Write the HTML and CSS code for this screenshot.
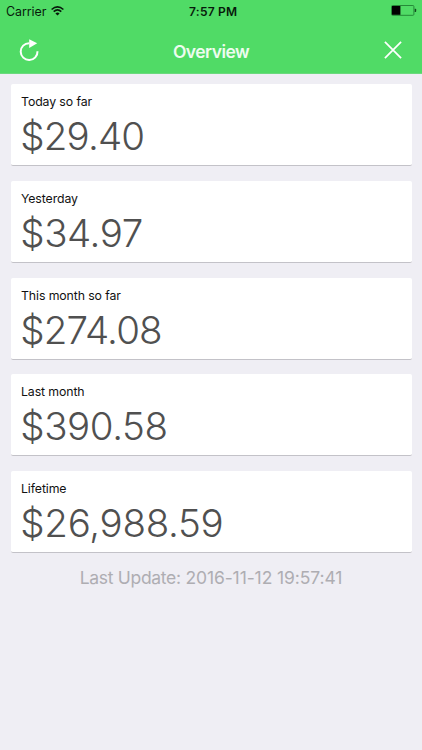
FILE: index.html
```html
<!DOCTYPE html>
<html lang="en">
<head>
<meta charset="utf-8">
<meta name="viewport" content="width=device-width">
<title>Overview</title>
<link rel="stylesheet" href="styles.css">
</head>
<body>
<header class="top">
  <div class="status">
    <div class="carrier"><span>Carrier</span>
      <svg class="wifi" width="13" height="10" viewBox="0 0 13 10" fill="none" stroke="#071a0b" stroke-width="1.6"><path d="M.6 3.5Q6.5-1.8 12.4 3.5M2.7 5.7Q6.5 2.2 10.3 5.7"/><path d="M6.5 9.5 4.4 7.4Q6.5 5.7 8.6 7.4Z" fill="#071a0b" stroke="none"/></svg>
    </div>
    <div class="time">7:57 PM</div>
    <svg class="battery" width="26" height="12" viewBox="0 0 26 12"><rect x=".5" y=".5" width="22.4" height="9.8" rx="1" fill="none" stroke="#258a38"/><path d="M1 1h8.4v8.8H1z" fill="#000"/><path d="M23.7 3.8h.8q.7 0 .7.8v1.6q0 .8-.7.8h-.8z" fill="#14491e"/></svg>
  </div>
  <nav class="nav">
    <svg class="refresh" width="22" height="24" viewBox="0 0 22 24"><path d="M10.2 5.2A8.4 8.4 0 1 0 18.5 13.2" fill="none" stroke="#fff" stroke-width="2"/><path d="M10.2 1.2 18.2 5.2 10.2 10Z" fill="#fff"/></svg>
    <h1 class="title">Overview</h1>
    <svg class="close" width="18" height="18" viewBox="0 0 18 18"><path d="M.9.9 17.1 17.1M17.1.9.9 17.1" stroke="#fff" stroke-width="1.7"/></svg>
  </nav>
</header>
<main class="cards">
  <section class="card"><h2 class="label">Today so far</h2><p class="amount tight">$29.40</p></section>
  <section class="card"><h2 class="label">Yesterday</h2><p class="amount">$34.97</p></section>
  <section class="card"><h2 class="label">This month so far</h2><p class="amount tight">$274.08</p></section>
  <section class="card"><h2 class="label">Last month</h2><p class="amount">$390.58</p></section>
  <section class="card"><h2 class="label">Lifetime</h2><p class="amount long">$26,988.59</p></section>
</main>
<p class="updated">Last Update: <span class="stamp">2016-11-12 19:57:41</span></p>
</body>
</html>
```
FILE: styles.css
```css
* { box-sizing: border-box; margin: 0; padding: 0; }
body {
  height: 750px;
  overflow: hidden;
  background: #efeef4;
  font-family: Inter, "Liberation Sans", sans-serif;
}
svg { display: block; }
.top {
  height: 74px;
  background: #50db66;
  border-bottom: 1px solid #6bd97d;
}
.status {
  display: grid;
  grid-template-columns: 1fr auto 1fr;
  align-items: center;
  height: 22px;
  padding: 0 5.5px 0 6px;
  color: #071a0b;
  font-size: 12.4px;
}
.carrier { display: flex; align-items: center; gap: 5px; letter-spacing: -.05px; }
.time { font-weight: 600; font-size: 12px; letter-spacing: .25px; padding-left: 4px; }
.battery { justify-self: end; }
.nav {
  display: flex;
  align-items: center;
  justify-content: space-between;
  height: 51px;
  padding: 4px 20px 0 19px;
}
.title {
  color: #edfcef;
  font-size: 17.5px;
  font-weight: 600;
  line-height: 24px;
  letter-spacing: -.55px;
  padding: 4px 3px 0 0;
}
.cards { display: grid; gap: 14.8px; padding: 10px 10.5px 0; }
.card {
  height: 82px;
  padding: 9px 10.5px 0;
  background: #fff;
  border-radius: 2px;
  border-bottom: 1px solid #c3c2c8;
}
.label {
  color: #111;
  font-size: 12.3px;
  font-weight: 400;
  line-height: 17px;
  letter-spacing: -.1px;
}
.amount {
  margin-left: -.7px;
  color: #505050;
  font-size: 38.5px;
  font-weight: 300;
  line-height: 52px;
  letter-spacing: -.45px;
}
.tight { letter-spacing: -.85px; }
.long { letter-spacing: -.3px; }
.updated {
  margin-top: 14px;
  text-align: center;
  color: #aeadb2;
  font-size: 17.5px;
  line-height: 22px;
  letter-spacing: -.3px;
}
.stamp { letter-spacing: -.1px; }
```
